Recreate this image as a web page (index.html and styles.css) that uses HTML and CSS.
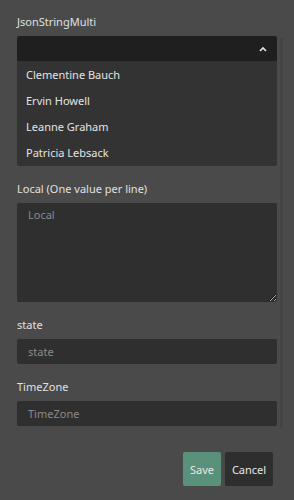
FILE: index.html
```html
<!DOCTYPE html>
<html lang="en">
<head>
    <meta charset="UTF-8">
    <meta name="viewport" content="width=device-width, initial-scale=1.0">
    <title>Edit record</title>
    <link rel="stylesheet" href="styles.css">
</head>
<body>
    <div class="dialog">
        <div class="scroll-area">
            <form class="fields">
                <div class="field">
                    <label class="field-label">JsonStringMulti</label>
                    <div class="select open">
                        <div class="select-head">
                            <svg class="chevron" width="8" height="6" viewBox="0 0 8 6">
                                <path d="M1 5 L4 2 L7 5" fill="none" stroke="#e6e6e6" stroke-width="1.6"/>
                            </svg>
                        </div>
                        <ul class="select-list">
                            <li>Clementine Bauch</li>
                            <li>Ervin Howell</li>
                            <li>Leanne Graham</li>
                            <li>Patricia Lebsack</li>
                        </ul>
                    </div>
                </div>

                <div class="field">
                    <label class="field-label">Local (One value per line)</label>
                    <textarea class="text-box area" placeholder="Local"></textarea>
                </div>

                <div class="field">
                    <label class="field-label">state</label>
                    <input type="text" class="text-box" placeholder="state">
                </div>

                <div class="field">
                    <label class="field-label">TimeZone</label>
                    <input type="text" class="text-box" placeholder="TimeZone">
                </div>
            </form>
            <div class="scroll-track"></div>
        </div>

        <div class="actions">
            <button class="btn btn-save">Save</button>
            <button class="btn btn-cancel">Cancel</button>
        </div>
    </div>
</body>
</html>
```

FILE: styles.css
```css
*{
    margin    : 0;
    padding   : 0;
    box-sizing: border-box;
}

body{
    font-family     : "Noto Sans", "Open Sans", sans-serif;
    font-size       : 11px;
    color           : #e3e3e3;
    background-color: #4a4a4a;
    width           : 294px;
    height          : 500px;
    overflow        : hidden;
}

.dialog{
    padding: 12px 0 0 17px;
}

.scroll-area{
    display: flex;
    gap    : 3px;
}

.fields{
    width         : 260px;
    display       : flex;
    flex-direction: column;
    gap           : 13px;
}

.scroll-track{
    width           : 3px;
    height          : 390px;
    margin-top      : 26px;
    background-color: #444;
}

.field{
    display       : flex;
    flex-direction: column;
}

.field-label{
    height     : 24px;
    line-height: 20px;
    color      : #e0e0e0;
}

.select{
    border-radius: 2px;
    overflow     : hidden;
}

.select-head{
    height          : 25px;
    background-color: #1f1f1f;
    display         : flex;
    align-items     : center;
    justify-content : flex-end;
    padding-right   : 10px;
}

.select-list{
    list-style      : none;
    background-color: #333;
    padding         : 1px 0 0;
}

.select-list li{
    height      : 26px;
    line-height : 26px;
    padding-left: 9px;
    color       : #e4e4e4;
}

.text-box{
    width           : 260px;
    height          : 25px;
    border          : none;
    outline         : none;
    border-radius   : 2px;
    background-color: #2f2f2f;
    color           : #e0e0e0;
    font-family     : inherit;
    font-size       : 11px;
    padding         : 0 11px;
}

.text-box::placeholder{
    color: #8a8a8a;
}

.area{
    height : 99px;
    padding: 4px 11px;
    resize : vertical;
}

.actions{
    display        : flex;
    justify-content: flex-end;
    gap            : 4px;
    padding-right  : 21px;
    margin-top     : 24px;
}

.btn{
    height       : 34px;
    border       : none;
    border-radius: 2px;
    font-family  : inherit;
    font-size    : 11px;
    color        : #e8e8e8;
}

.btn-save{
    width           : 38px;
    background-color: #5a917a;
}

.btn-cancel{
    width           : 48px;
    background-color: #2e2e2e;
}
```
